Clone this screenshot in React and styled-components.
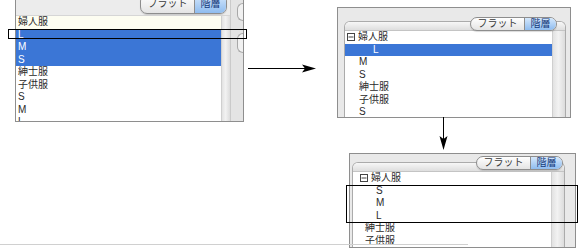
import React from "react";
import styled, { createGlobalStyle } from "styled-components";

const Global = createGlobalStyle`
  html, body { margin: 0; padding: 0; background: #fff; }
  body { font-family: "Liberation Sans", "Noto Sans CJK JP", sans-serif; }
`;

const Canvas = styled.div`
  position: relative;
  width: 583px;
  height: 250px;
  background: #fff;
  overflow: hidden;
  font-family: "Liberation Sans", "Noto Sans CJK JP", sans-serif;
`;

/* a screenshot placed on the diagram canvas */
const Shot = styled.div`
  position: absolute;
  left: ${(p) => p.$x}px;
  top: ${(p) => p.$y}px;
  width: ${(p) => p.$w}px;
  height: ${(p) => p.$h}px;
  box-sizing: border-box;
  border: 1px solid #8e8e8e;
  background: #e9e9e9;
  overflow: hidden;
`;

const Window1 = styled(Shot)`
  display: flex;
`;

const MainCol = styled.div`
  flex: 1;
  display: flex;
  flex-direction: column;
  min-width: 0;
`;

const TopBar = styled.div`
  height: ${(p) => p.$h}px;
  flex: none;
  box-sizing: border-box;
  display: flex;
  justify-content: flex-end;
  align-items: flex-end;
  padding: 0 ${(p) => p.$pr}px 1px 0;
  background: #ececec;
  border-bottom: 1px solid #d6d6d6;
`;

const Body = styled.div`
  flex: 1;
  display: flex;
  min-height: 0;
`;

const List = styled.div`
  flex: 1;
  background: #fff;
  display: flex;
  flex-direction: column;
  overflow: hidden;
`;

const Row = styled.div`
  height: 12.5px;
  flex: none;
  display: flex;
  align-items: center;
  padding-left: ${(p) => p.$indent || 0}px;
  font-size: 10px;
  line-height: 1;
  color: ${(p) => (p.$sel ? "#fff" : "#2a2a2a")};
  background: ${(p) => (p.$sel ? "#3b76d6" : p.$cream ? "#fdfdf1" : "transparent")};
  white-space: nowrap;
`;

const Toggle = styled.svg`
  width: 8px;
  height: 8px;
  margin-right: ${(p) => p.$gap}px;
  flex: none;
`;

const Scroll = styled.div`
  width: ${(p) => p.$w}px;
  flex: none;
  background: linear-gradient(90deg, #e2e2e2 0%, #f2f2f2 45%, #dcdcdc 100%);
  border-left: 1px solid #cfcfcf;
`;

const SideStrip = styled.div`
  width: 12px;
  flex: none;
  background: #e4e4e4;
  border-left: 1px solid #cacaca;
  display: flex;
  flex-direction: column;
  padding-top: 14px;
  gap: 12px;
  align-items: flex-end;
`;

const Pill = styled.div`
  width: 5px;
  height: ${(p) => p.$h}px;
  border: 1px solid #a8a8a8;
  border-right: none;
  border-radius: 7px 0 0 7px;
  background: #f1f1f1;
`;

const Seg = styled.div`
  display: flex;
  height: ${(p) => p.$h || 14}px;
  box-sizing: border-box;
  border: 1px solid #8d8d8d;
  border-radius: 7px;
  overflow: hidden;
  background: linear-gradient(#ffffff, #e4e4e4);
  font-size: 10px;
  box-shadow: 0 1px 1px rgba(0, 0, 0, 0.15);
`;

const SegItem = styled.div`
  width: ${(p) => p.$w}px;
  display: flex;
  align-items: center;
  justify-content: center;
  color: ${(p) => (p.$on ? "#163b7a" : "#3a3a3a")};
  background: ${(p) => (p.$on ? "linear-gradient(#d5e8fc, #8fbcef)" : "transparent")};
  border-left: ${(p) => (p.$on ? "1px solid #8d8d8d" : "none")};
  line-height: 1;
`;

const Framed = styled(Shot)`
  display: flex;
  flex-direction: column;
  padding: ${(p) => p.$pad};
`;

const InnerFrame = styled.div`
  flex: 1;
  display: flex;
  flex-direction: column;
  border: 1px solid #ababab;
  border-bottom: none;
  border-radius: 6px 6px 0 0;
  overflow: hidden;
  background: #fff;
`;

const FrameHead = styled.div`
  height: ${(p) => p.$h}px;
  flex: none;
  background: linear-gradient(#f7f7f7, #dedede);
  border-bottom: 1px solid #c4c4c4;
`;

const SegSpot = styled.div`
  position: absolute;
  top: ${(p) => p.$t}px;
  right: ${(p) => p.$r}px;
`;

const Mark = styled.div`
  position: absolute;
  left: ${(p) => p.$x}px;
  top: ${(p) => p.$y}px;
  width: ${(p) => p.$w}px;
  height: ${(p) => p.$h}px;
  box-sizing: border-box;
  border: 1px solid #000;
`;

const Arrow = styled.svg`
  position: absolute;
  left: 0;
  top: 0;
  pointer-events: none;
`;

const Rule = styled.div`
  position: absolute;
  left: 0;
  top: 244px;
  width: 468px;
  height: 1px;
  background: #d0d0d0;
`;

const Segmented = ({ h }) => (
  <Seg $h={h}>
    <SegItem $w={53}>フラット</SegItem>
    <SegItem $w={31} $on>
      階層
    </SegItem>
  </Seg>
);

const Minus = ({ gap }) => (
  <Toggle $gap={gap} viewBox="0 0 8 8">
    <rect x="0.5" y="0.5" width="7" height="7" fill="#fff" stroke="#444" strokeWidth="1" />
    <line x1="1.5" y1="4" x2="6.5" y2="4" stroke="#444" strokeWidth="1" />
  </Toggle>
);

export default function App() {
  return (
    <Canvas>
      <Global />

      {/* flat list (before) */}
      <Window1 $x={15} $y={-12} $w={229} $h={134}>
        <MainCol>
          <TopBar $h={27} $pr={3}>
            <Segmented h={20} />
          </TopBar>
          <Body>
            <List>
              <Row $cream $indent={2}>婦人服</Row>
              <Row $sel $indent={2}>L</Row>
              <Row $sel $indent={2}>M</Row>
              <Row $sel $indent={2}>S</Row>
              <Row $indent={2}>紳士服</Row>
              <Row $indent={2}>子供服</Row>
              <Row $indent={2}>S</Row>
              <Row $indent={2}>M</Row>
              <Row $indent={2}>L</Row>
            </List>
            <Scroll $w={8} />
          </Body>
        </MainCol>
        <SideStrip>
          <Pill $h={16} />
          <Pill $h={18} />
        </SideStrip>
      </Window1>

      {/* tree view, L dragged */}
      <Framed $x={337} $y={7} $w={234} $h={111} $pad="13px 4px 0 6px">
        <InnerFrame>
          <FrameHead $h={8} />
          <Body>
            <List>
              <Row $indent={2}>
                <Minus gap={3} />
                婦人服
              </Row>
              <Row $sel $indent={28}>L</Row>
              <Row $indent={14}>M</Row>
              <Row $indent={14}>S</Row>
              <Row $indent={14}>紳士服</Row>
              <Row $indent={14}>子供服</Row>
              <Row $indent={14}>S</Row>
            </List>
            <Scroll $w={12} />
          </Body>
        </InnerFrame>
        <SegSpot $t={9} $r={13}>
          <Segmented />
        </SegSpot>
      </Framed>

      {/* tree view, result */}
      <Framed $x={349} $y={153} $w={227} $h={95} $pad="8px 10px 0 2px">
        <InnerFrame>
          <FrameHead $h={8} />
          <Body>
            <List>
              <Row $indent={7}>
                <Minus gap={3} />
                婦人服
              </Row>
              <Row $indent={23}>S</Row>
              <Row $indent={23}>M</Row>
              <Row $indent={23}>L</Row>
              <Row $indent={12}>紳士服</Row>
              <Row $indent={12}>子供服</Row>
            </List>
            <Scroll $w={12} />
          </Body>
        </InnerFrame>
        <SegSpot $t={2} $r={12}>
          <Segmented />
        </SegSpot>
      </Framed>

      <Rule />

      {/* annotation boxes */}
      <Mark $x={8} $y={29} $w={239} $h={10} />
      <Mark $x={346} $y={185} $w={232} $h={38} />

      {/* arrows */}
      <Arrow width="583" height="250" viewBox="0 0 583 250">
        <line x1="248" y1="68.5" x2="306" y2="68.5" stroke="#000" strokeWidth="1" />
        <polygon points="302,64.5 316,68.5 302,72.5 305,68.5" fill="#000" />
        <line x1="443.5" y1="117" x2="443.5" y2="140" stroke="#000" strokeWidth="1" />
        <polygon points="439.5,136 443.5,150 447.5,136 443.5,139" fill="#000" />
      </Arrow>
    </Canvas>
  );
}
